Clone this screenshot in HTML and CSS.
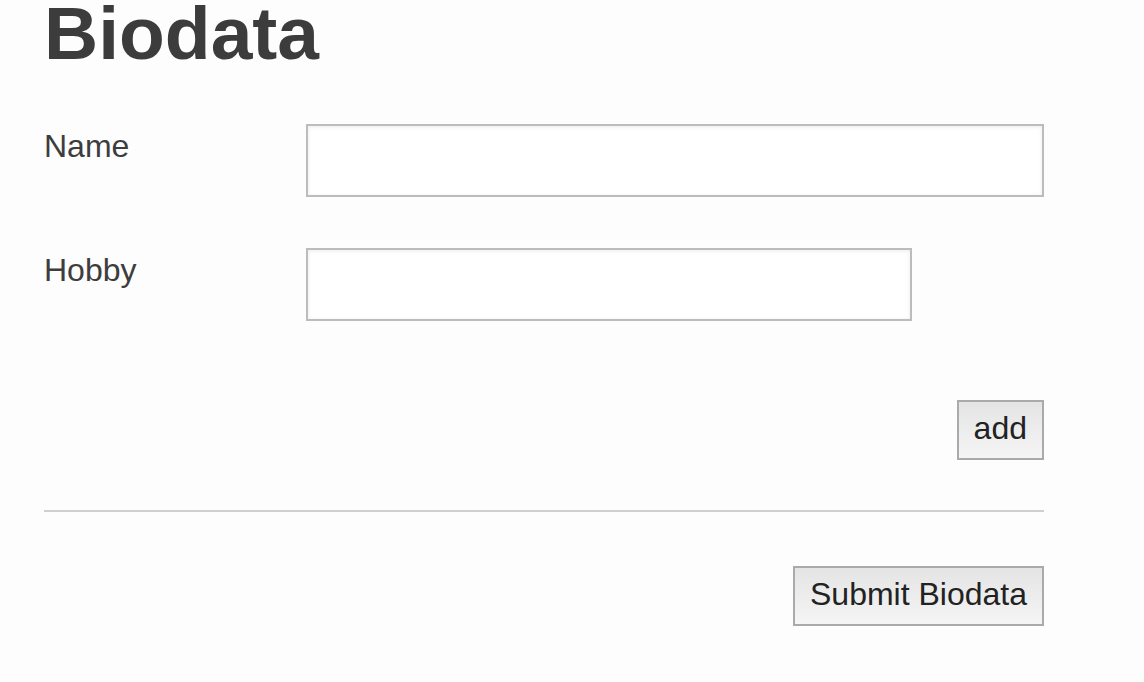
FILE: index.html
```html
<!DOCTYPE html>
<html>
<head>
<meta charset="utf-8">
<link rel="stylesheet" href="styles.css">
</head>
<body>
<div class="page">
  <h1 class="title">Biodata</h1>
  <form class="form">
    <div class="row">
      <label class="label">Name</label>
      <input class="field field-wide" type="text">
    </div>
    <div class="row row-hobby">
      <label class="label">Hobby</label>
      <input class="field field-mid" type="text">
    </div>
    <div class="actions actions-add">
      <button type="button" class="btn">add</button>
    </div>
    <hr class="divider">
    <div class="actions actions-submit">
      <button type="button" class="btn">Submit Biodata</button>
    </div>
  </form>
</div>
</body>
</html>
```

FILE: styles.css
```css
html, body {
  margin: 0;
  padding: 0;
  background: #fdfdfd;
}
body {
  font-family: "Liberation Sans", Arial, Helvetica, sans-serif;
  color: #3d3d3d;
}
.page {
  width: 1000px;
  padding-left: 44px;
}
.title {
  margin: 0;
  font-size: 75px;
  line-height: 66px;
  font-weight: bold;
  color: #3c3c3c;
}
.form {
  margin: 58px 0 0 0;
}
.row {
  display: flex;
  align-items: flex-start;
}
.row-hobby {
  margin-top: 51px;
}
.label {
  width: 262px;
  flex: none;
  font-size: 32px;
  line-height: 36px;
  padding-top: 4px;
  color: #3d3d3d;
}
.field {
  box-sizing: border-box;
  height: 73px;
  margin: 0;
  border: 2px solid #bcbcbc;
  border-radius: 0;
  background: #fff;
  box-shadow: inset 0 1px 4px rgba(0,0,0,0.08);
  font-size: 30px;
  font-family: inherit;
  padding: 0 10px;
  outline: none;
}
.field-wide {
  width: 738px;
}
.field-mid {
  width: 606px;
}
.actions {
  display: flex;
  justify-content: flex-end;
}
.actions-add {
  margin-top: 79px;
}
.actions-submit {
  margin-top: 54px;
}
.btn {
  box-sizing: border-box;
  height: 60px;
  margin: 0;
  padding: 0 15px 5px 15px;
  border: 2px solid #aaaaaa;
  border-radius: 0;
  background: linear-gradient(to bottom, #e4e4e4, #f5f5f5);
  font-family: inherit;
  font-size: 32px;
  line-height: 34px;
  color: #222;
  white-space: nowrap;
}
.divider {
  margin: 50px 0 0 0;
  height: 0;
  border: 0;
  border-top: 2px solid #cfcfcf;
}
```
